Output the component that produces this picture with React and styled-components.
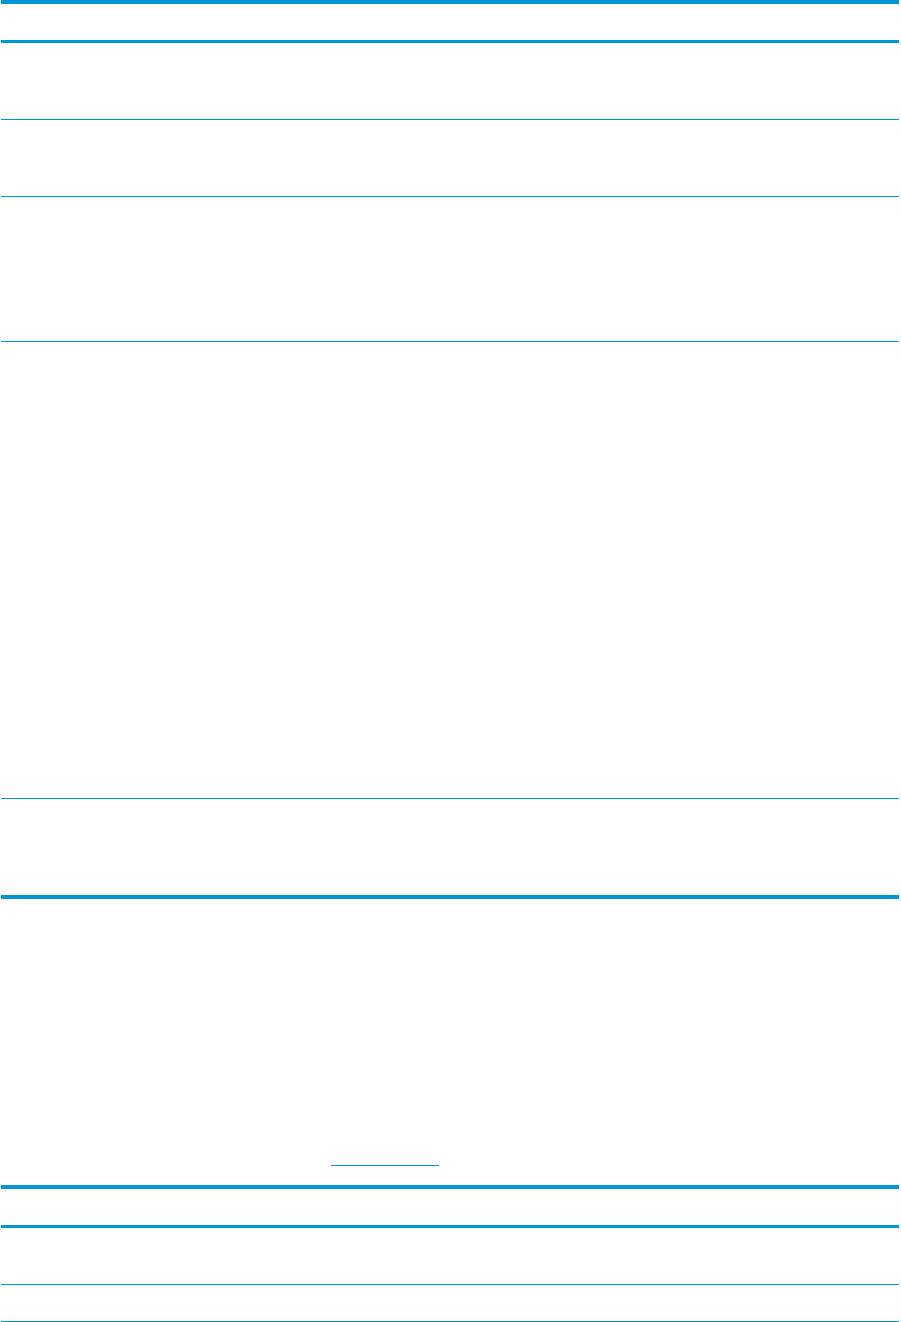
import React from 'react';
import styled, {createGlobalStyle} from 'styled-components';

const GlobalStyle = createGlobalStyle`
  *, *::before, *::after {
    box-sizing: border-box;
  }

  body {
    margin: 0;
    background: #ffffff;
    font-family: "Liberation Sans", Arial, sans-serif;
    color: #000000;
  }
`;

const BLUE = '#0096d6';

const PageStyled = styled.div`
  display: flex;
  flex-direction: column;
  width: 901px;
  padding: 0 2px 0 1px;
`;

const TableStyled = styled.div`
  display: flex;
  flex-direction: column;
  border-top: 4px solid ${BLUE};
  border-bottom: ${({$closed}) => ($closed ? `4px solid ${BLUE}` : 'none')};
`;

const HeaderRow = styled.div`
  display: grid;
  grid-template-columns: 1fr 1fr;
  height: 39px;
  border-bottom: 3px solid ${BLUE};
  font-size: 13px;
  font-weight: bold;
`;

const Row = styled.div`
  display: grid;
  grid-template-columns: 1fr 1fr;
  height: ${({$height}) => $height}px;
  border-bottom: ${({$last}) => ($last ? 'none' : `1px solid ${BLUE}`)};
  font-size: 13px;
`;

const Notes = styled.div`
  display: flex;
  flex-direction: column;
  justify-content: flex-end;
  height: 286px;
  padding: 0 0 19px 330px;
  font-size: 13px;
`;

const LinkStyled = styled.a`
  display: block;
  width: 108px;
  height: 1px;
  background: ${BLUE};
`;

const firstRows = [
  {id: 'r1', height: 77},
  {id: 'r2', height: 77},
  {id: 'r3', height: 145},
  {id: 'r4', height: 457},
  {id: 'r5', height: 96, last: true},
];

const secondRows = [
  {id: 's1', height: 57},
  {id: 's2', height: 37},
];

const Table = ({rows, closed}) => (
  <TableStyled $closed={closed}>
    <HeaderRow />
    {
      rows.map((row) => (
        <Row key={row.id} $height={row.height} $last={row.last} />
      ))
    }
  </TableStyled>
);

export default function App() {
  return (
    <>
      <GlobalStyle />
      <PageStyled>
        <Table rows={firstRows} closed />
        <Notes>
          <LinkStyled href="#" aria-label="link" />
        </Notes>
        <Table rows={secondRows} />
      </PageStyled>
    </>
  );
}
